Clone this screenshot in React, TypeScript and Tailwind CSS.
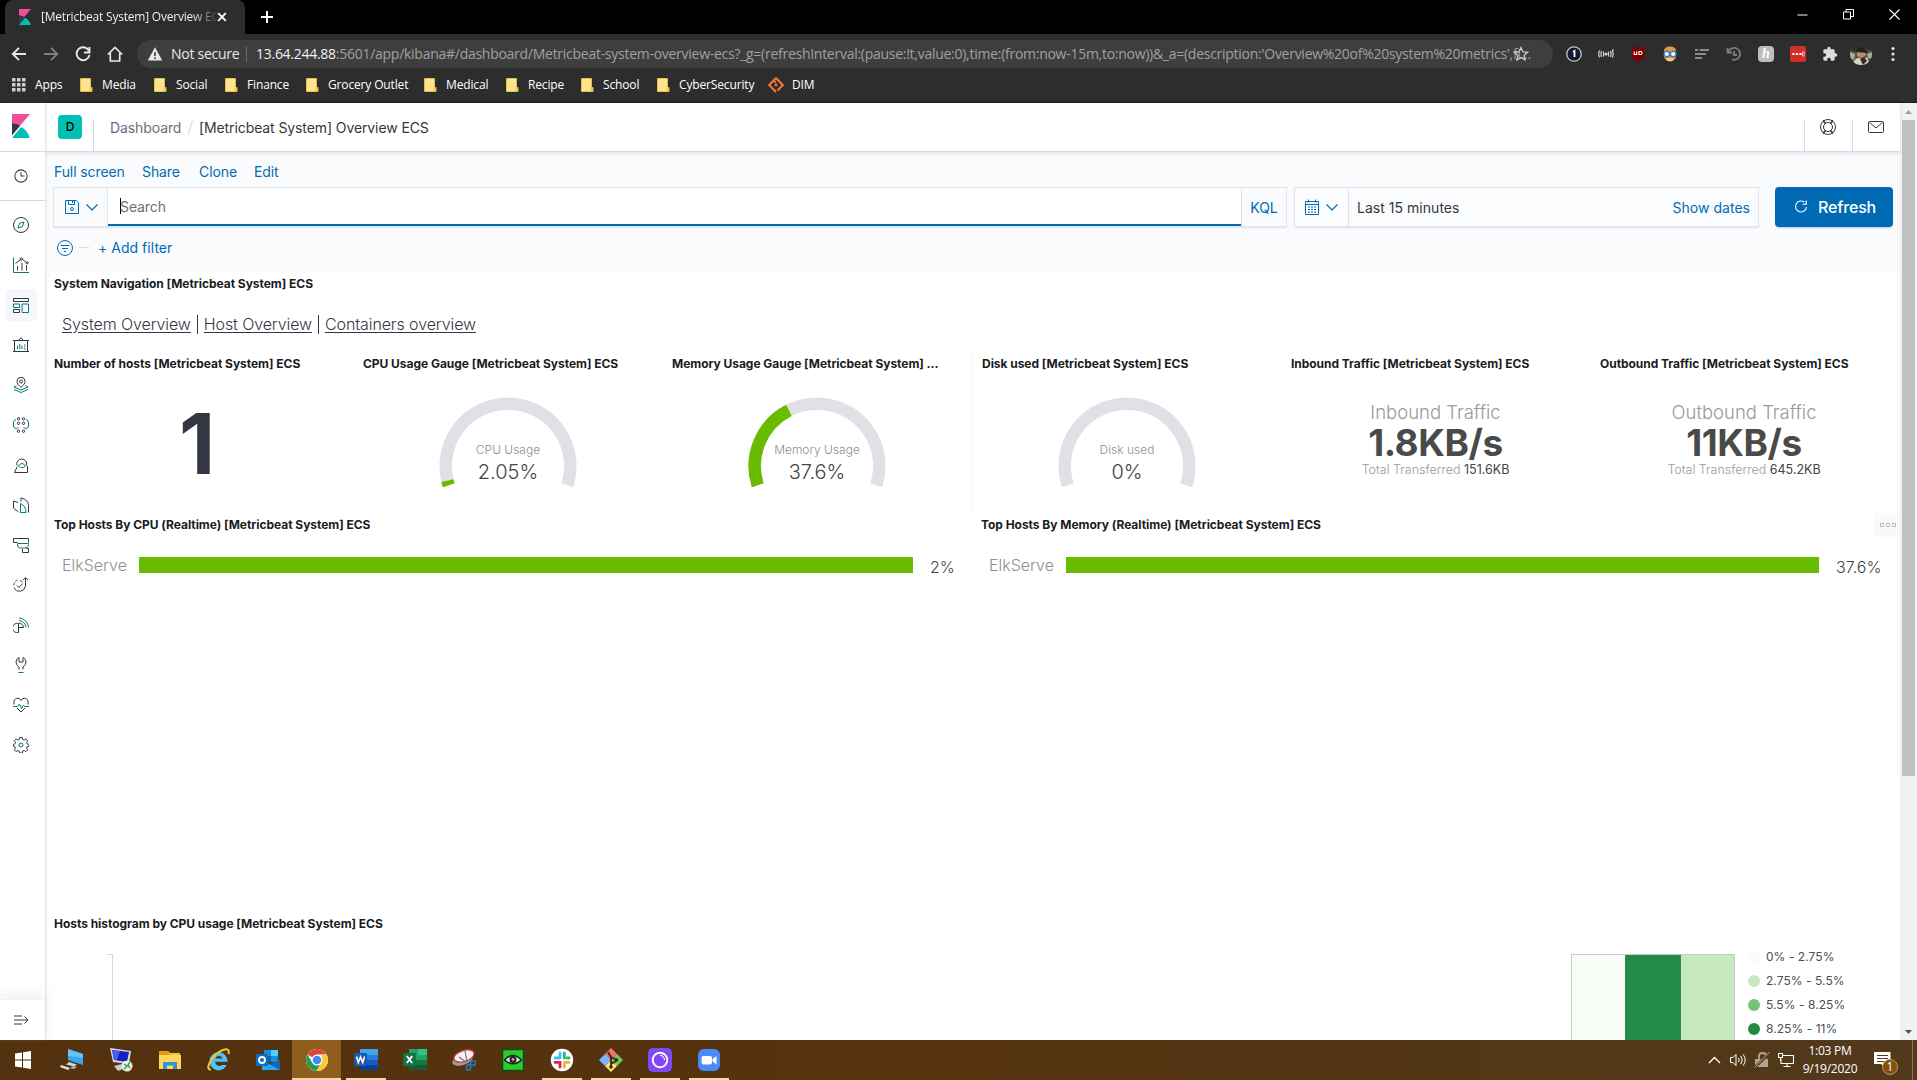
import React from "react";

type Kids = { children?: React.ReactNode };

const DARK = "#343741";
const TEAL = "#017d73";

function Ico({ children, s = 16, c = DARK, w = 1, vb = 16 }: Kids & { s?: number; c?: string; w?: number; vb?: number }) {
  return (
    <svg width={s} height={s} viewBox={`0 0 ${vb} ${vb}`} fill="none" stroke={c} strokeWidth={w} className="block shrink-0">
      {children}
    </svg>
  );
}

function KibanaLogo({ w, h }: { w: number; h: number }) {
  return (
    <svg width={w} height={h} viewBox="0 0 18 24" preserveAspectRatio="none" className="block shrink-0">
      <path d="M0 0h18L0 21.2z" fill="#F04E98" />
      <path d="M0 9.3v12L8 11.7A16 16 0 0 0 0 9.3z" fill="#343741" />
      <path d="M9 13 .6 23.3V24H17.7A16 16 0 0 0 9 13z" fill="#00BFB3" />
    </svg>
  );
}

/* ---------- Browser chrome ---------- */

function TabStrip() {
  return (
    <div className="flex h-[34px] bg-black">
      <div className="ml-[5px] flex h-full w-[240px] items-center rounded-t-lg bg-[#2d2d2d] pl-[14px]">
        <KibanaLogo w={12} h={16} />
        <span className="ml-[10px] w-[176px] overflow-hidden bg-gradient-to-r from-white from-85% to-[#444] bg-clip-text text-[12px] tracking-[-0.21px] whitespace-nowrap text-transparent">
          [Metricbeat System] Overview ECS
        </span>
        <Ico s={10} c="#fff" w={1.9} vb={10}>
          <path d="M1.2 1.2l7.6 7.6M8.8 1.2L1.2 8.8" />
        </Ico>
      </div>
      <div className="ml-[15px] flex items-center">
        <Ico s={14} c="#fff" w={2} vb={14}>
          <path d="M7 1v12M1 7h12" />
        </Ico>
      </div>
      <div className="mr-[17px] ml-auto flex items-center gap-[35px] pb-[6px]">
        <Ico s={11} c="#fff" vb={11}><path d="M.5 6h10" /></Ico>
        <Ico s={11} c="#fff" vb={11}><path d="M.5 3h7v7h-7zM3 3V.5h7.500v7H8" /></Ico>
        <Ico s={11} c="#fff" w={1.1} vb={11}><path d="M.5.5l10 10M10.500.5l-10 10" /></Ico>
      </div>
    </div>
  );
}

function Extensions() {
  return (
    <div className="ml-[13px] flex items-center gap-[16px]">
      <Ico>
        <circle cx="8" cy="8" r="7.200" fill="#111a2e" stroke="#c5c8cc" strokeWidth="1.300" />
        <path d="M7 6l1.500-1v6" stroke="#fff" strokeWidth="1.800" />
      </Ico>
      <Ico c="#d6d6d6" w={1.2}>
        <circle cx="8" cy="8" r="1" fill="#d6d6d6" />
        <path d="M5.500 5.500v5M10.500 5.500v5M3.500 5Q2.500 8 3.500 11M12.500 5q1 3 0 6M1.500 4.500q-1.500 3.500 0 7M14.500 11.500q1.200-3.500 0-7l1-1" />
      </Ico>
      <Ico>
        <path d="M8 .5 14.500 2v6c0 4-3 6-6.500 7.500C4.500 14 1.500 12 1.500 8V2z" fill="#800000" stroke="none" />
        <path d="M4.200 5.500v3h2.500v-3M9 5.500h1.800q1.200 0 1.200 1.500T10.800 8.500H9z" stroke="#fff" strokeWidth="1.100" />
      </Ico>
      <Ico>
        <path d="M2 5q0-4.500 6-4.500T14 5v6q-2 4.500-6 4.500T2 11z" fill="#e59a3c" stroke="none" />
        <path d="M4 12h8l-2 3H6z" fill="#f4c79a" stroke="none" />
        <circle cx="4.800" cy="8" r="2.800" fill="#fff" stroke="#2d7fc4" strokeWidth="1.400" />
        <circle cx="11.200" cy="8" r="2.800" fill="#fff" stroke="#2d7fc4" strokeWidth="1.400" />
      </Ico>
      <Ico c="#8c8c8c" w={2}><path d="M1 4h3M5.500 4H15M1 8h10M1 12h7M10 8h2" /></Ico>
      <Ico c="#7d7d7d" w={1.8}><path d="M2.500 5.500A6 6 0 1 1 6 13.500M1.500 2v4.500H6M8 5v4h3" /></Ico>
      <span className="flex h-4 w-4 items-center justify-center rounded-sm bg-[#bdbdbd] font-['Liberation_Serif',serif] text-[14px] leading-none font-bold text-white italic">h</span>
      <Ico>
        <rect width="16" height="16" rx="2" fill="#d32d27" stroke="none" />
        <path d="M2.300 8h2.200M5.800 8H8M9.300 8h2.200M13.400 5.500v5" stroke="#fff" strokeWidth="2.200" />
        <path d="M13.800 5v6" stroke="#d32d27" />
      </Ico>
      <svg width="16" height="16" viewBox="0 0 24 24" fill="#dcdcdc" className="block">
        <path d="M20.500 11H19V7a2 2 0 0 0-2-2h-4V3.500a2.500 2.500 0 0 0-5 0V5H4a2 2 0 0 0-2 2v3.800h1.500a2.700 2.700 0 0 1 0 5.400H2V20a2 2 0 0 0 2 2h3.800v-1.500a2.700 2.700 0 0 1 5.400 0V22H17a2 2 0 0 0 2-2v-4h1.500a2.500 2.500 0 0 0 0-5z" />
      </svg>
      <svg width="22" height="22" viewBox="0 0 22 22" className="-ml-[4px] block">
        <defs><clipPath id="avatar"><circle cx="11" cy="11" r="11" /></clipPath></defs>
        <g clipPath="url(#avatar)">
          <rect width="22" height="22" fill="#4e5a48" />
          <path d="M0 0h22v8L14 6 6 9 0 7z" fill="#2a3426" />
          <path d="M7 8q4-4 8 0l1 4-4 3-5-2z" fill="#bd8a6c" />
          <path d="M6 7q5-5 10 0l2 3-12-1z" fill="#23201f" />
          <path d="M3 22q1-8 7-7l3 2 4-3 3 8z" fill="#d8d2cb" />
          <path d="M10 16l4-2 3 4-4 4z" fill="#3b2c26" />
          <path d="M0 9l5 2-1 6-4-2zM17 11l5-2v7l-4-1z" fill="#a6ae9f" />
        </g>
      </svg>
      <svg width="4" height="16" viewBox="0 0 4 16" fill="#e6e6e6" className="ml-[3px] block">
        <circle cx="2" cy="2.500" r="1.600" /><circle cx="2" cy="8" r="1.600" /><circle cx="2" cy="13.500" r="1.600" />
      </svg>
    </div>
  );
}

function AddressBar() {
  return (
    <div className="flex h-[35px] items-center pt-1">
      <div className="ml-[11px] flex w-[126px] items-center gap-[16px]">
        <Ico c="#e8e8e8" w={1.9}><path d="M15 8H2M8 1.800L1.800 8 8 14.200" /></Ico>
        <Ico c="#808080" w={1.9}><path d="M1 8h13M8 1.800L14.200 8 8 14.200" /></Ico>
        <Ico c="#e8e8e8" w={1.9}><path d="M13.800 4.500A6.500 6.500 0 1 0 14.500 9M14.500 1v5.500H9" /></Ico>
        <Ico c="#e8e8e8" w={1.7}><path d="M.8 8.500L8 1.500l7.200 7M3.300 7v8h9.400V7" /></Ico>
      </div>
      <div className="flex h-7 w-[1416px] items-center rounded-full bg-[#3e3e3e] pl-[10px]">
        <svg width="16" height="16" viewBox="0 0 16 16" className="block shrink-0">
          <path d="M8 1.200L15.200 14.500H.8z" fill="#e8e8e8" />
          <path d="M8 6v4M8 11.300v1.600" stroke="#3e3e3e" strokeWidth="1.600" />
        </svg>
        <span className="ml-[8px] w-[67px] text-[14px] tracking-[-0.27px] whitespace-nowrap text-[#e8e8e8]">Not secure</span>
        <span className="ml-[8px] h-4 w-px bg-[#6c6c6c]" />
        <span className="ml-[9px] w-[1257px] text-[14px] tracking-[-0.27px] whitespace-nowrap text-[#a0a0a0]">
          <span className="text-[#f0f0f0]">13.64.244.88</span>
          :5601/app/kibana#/dashboard/Metricbeat-system-overview-ecs?_g=(refreshInterval:(pause:!t,value:0),time:(from:now-15m,to:now))&amp;_a=(description:'Overview%20of%20system%20metrics',fi...
        </span>
        <Ico c="#c8c8c8" w={1.3}>
          <path d="M8 1.500l1.900 4.400 4.700.4-3.600 3.100 1.100 4.600L8 11.600 3.900 14 5 9.400 1.400 6.300l4.700-.4z" />
        </Ico>
      </div>
      <Extensions />
    </div>
  );
}

const bookmarks: [string, string][] = [
  ["Media", "w-[74px]"], ["Social", "w-[71px]"], ["Finance", "w-[81px]"], ["Grocery Outlet", "w-[118px]"],
  ["Medical", "w-[82px]"], ["Recipe", "w-[75px]"], ["School", "w-[76px]"], ["CyberSecurity", "w-[111px]"],
];

function BookmarkBar() {
  return (
    <div className="flex h-[34px] items-center border-b border-[#1c1c1c] pb-[2px] pl-[12px] text-[12px] tracking-[-0.15px] whitespace-nowrap text-white">
      <svg width="14" height="14" viewBox="0 0 14 14" fill="#cfcfcf" className="block">
        {[0, 5, 10].map((y) => [0, 5, 10].map((x) => <rect key={x + "-" + y} x={x} y={y} width="3.500" height="3.500" />))}
      </svg>
      <span className="ml-[9px] w-[45px]">Apps</span>
      {bookmarks.map(([name, w]) => (
        <div key={name} className={`flex items-center ${w}`}>
          <svg width="13" height="14" viewBox="0 0 13 14" className="mr-[9px] block shrink-0">
            <path d="M.5.5h10v9h1.500v4H.5z" fill="#ffe48f" stroke="#e8bf45" />
            <path d="M9.500 13V10H12v3.500z" fill="#f2c74a" />
          </svg>
          {name}
        </div>
      ))}
      <Ico c="#f4772e" w={2}>
        <path d="M8 1L1.200 8 8 15M8 5.500L5.500 3.800M8 1l6.800 7L9.500 13.500" />
        <circle cx="8" cy="8" r="1.400" fill="#f4772e" stroke="none" />
      </Ico>
      <span className="ml-[8px]">DIM</span>
    </div>
  );
}

/* ---------- Kibana ---------- */

const navIcons: React.ReactNode[] = [
  <><circle cx="8" cy="8" r="7.500" /><path d="M11 5L9.500 9.500 5 11l1.500-4.500z" stroke={TEAL} /></>,
  <><path d="M.5.500v15H16" stroke={TEAL} /><path d="M4.500 9v4.500M9 6v7.500M13.500 8v5.500M2.500 6.500L7 3M9.500 2.500l4 3" /><circle cx="8.300" cy="2" r="1.200" /><circle cx="14.300" cy="5.800" r="1" /></>,
  <><path d="M.5 1.500h15v3H.5zM.5 12.500h6v3h-6z" /><path d="M.5 7h6v3.500h-6zM9 7h6.500v8.500H9z" stroke={TEAL} /></>,
  <><path d="M1.500 3.500h13v11h-13zM0 3.500h1.500M14.500 3.500H16M0 14.500h2M14 14.500h2M5.500 3.500L8 .8l2.500 2.700" /><path d="M4.500 8.500v3.500M6.800 7v5M9 8.500V12M11 8h1.500M11 10h1.500M11 12h1.500" stroke={TEAL} /></>,
  <><path d="M8 10.500C5 7.500 4 6.500 4 4.300a4 4 0 0 1 8 0C12 6.500 11 7.500 8 10.500z" /><circle cx="8" cy="4.500" r="1.500" /><path d="M3.500 8.500L1 10l7 3 7-3-2.500-1.500M1 12.500l7 3 7-3" stroke={TEAL} /></>,
  <><circle cx="5.500" cy="1.800" r="1.200" /><circle cx="10.500" cy="1.800" r="1.200" /><circle cx="5.500" cy="6.300" r="1.200" /><circle cx="10.500" cy="6.300" r="1.200" /><circle cx="5.500" cy="14.200" r="1.200" /><circle cx="10.500" cy="14.200" r="1.200" /><path d="M3 2.500Q.5 3 .5 6v4l3 2 2-2M13 2.500q2.500.5 2.500 3.500v4l-3 2-2-2" stroke={TEAL} /></>,
  <><path d="M4 8.500a5 5 0 1 1 9.500 0M4.300 9.500L1.500 15.500h13V9" /><path d="M5.500 9Q9 4 12.500 9 9 12.500 5.500 9z" stroke={TEAL} /></>,
  <><path d="M5 5.500L.5 4v7l5 4M8 4.500V.8q7.500 2 7.500 7.700v7" /><path d="M7.500 6.500v9h5.500q0-6.500-5.500-9z" stroke={TEAL} /></>,
  <><path d="M4.500 5.500H.5v-4h15v4M9.500 12v3.500h6v-4h-2" /><path d="M4.500 6.500h11v1q0 3.500-3.500 3.500H7.500Q4.500 11 4.500 8z" stroke={TEAL} /></>,
  <><path d="M1 10.500A6 6 0 0 0 12.500 9V1M10 3l2.500-2.300L15 3M4 8.500l2 2 3.500-4" /><path d="M.8 8.500Q1 4 5 3M7 3.500L10 5" stroke={TEAL} strokeDasharray="3 1.200" /></>,
  <><path d="M5.500 6.500v9a4.700 4.700 0 1 1 0-9zM5.500 10.500h5a4.600 4.600 0 0 0-5-4.300" /><path d="M6 1a10 10 0 0 1 9.500 9.500M6 3.500a7.500 7.500 0 0 1 7 7" stroke={TEAL} /></>,
  <><path d="M6 12.500V10Q3 8 3 5t3-4.500V5h4V.5q3 1.500 3 4.500t-3 5v2.500" /><path d="M5.500 15.500h5" stroke={TEAL} /></>,
  <><path d="M1 7.500Q0 1.500 4.500 1.200 7 1.200 8 3.500 9 1.200 11.500 1.200 16 1.500 15 7.500M4 11l4 4 4-4" /><path d="M0 9.500h4.500L6.500 7l2 4.500L10.500 8l1 1.500H16" stroke={TEAL} /></>,
  <><path d="M6.700.5h2.600l.4 2 1.500.6 1.700-1.200 1.800 1.800-1.200 1.700.6 1.500 2 .4v2l-2 .4-.6 1.500 1.200 1.700-1.800 1.800-1.700-1.200-1.500.6-.4 2H6.700l-.4-2-1.500-.6-1.700 1.200-1.800-1.800 1.200-1.700-.6-1.500-1.400-.4v-2l1.400-.4.6-1.500-1.200-1.700 1.800-1.800 1.700 1.200 1.500-.6z" /><circle cx="8" cy="8" r="2" stroke={TEAL} /></>,
];

function Sidebar() {
  return (
    <nav className="z-10 flex w-[46px] shrink-0 flex-col border-r border-[#e3e6ee] bg-white shadow-[1px_0_3px_rgba(152,162,179,0.15)]">
      <div className="flex h-[49px] border-b border-[#d3dae6] pt-[11px] pl-[12px]">
        <KibanaLogo w={18} h={24} />
      </div>
      <div className="flex h-[49px] items-center border-b border-[#d3dae6] pl-[14px]">
        <Ico s={14}><circle cx="8" cy="8" r="7" strokeWidth="1.150" /><path d="M8 3.500V8h4" strokeWidth="1.150" /></Ico>
      </div>
      <div className="mt-[4px] flex flex-col">
        {navIcons.map((icon, i) => (
          <div key={i} className="flex h-10 items-center pl-[5px]">
            <div className={`flex h-8 w-8 items-center justify-center rounded ${i === 2 ? "bg-[#f5f7fa]" : ""}`}>
              <Ico>{icon}</Ico>
            </div>
          </div>
        ))}
      </div>
      <div className="mt-auto flex h-[41px] items-center border-t border-[#eceff5] pl-[13px] shadow-[0_-6px_14px_rgba(152,162,179,0.15)]">
        <Ico><path d="M1 4h8M1 8h13.500M1 12h8M11.500 4.500L15 8l-3.500 3.500" /></Ico>
      </div>
    </nav>
  );
}

function HeaderBar() {
  return (
    <header className="z-[5] flex h-[49px] shrink-0 border-b border-[#d3dae6] bg-white text-[14px] shadow-[0_2px_3px_rgba(152,162,179,0.25)]">
      <div className="mt-4 flex h-8 w-[48px] border-r border-[#d3dae6] pl-[12px]">
        <span className="-mt-[4px] flex h-6 w-6 items-center justify-center rounded bg-[#00bfb3] text-[12px] font-medium text-black">D</span>
      </div>
      <div className="flex h-12 items-center pl-[16px] whitespace-nowrap">
        <span className="w-[76px] tracking-[-0.1px] text-[#69707d]">Dashboard</span>
        <span className="mr-[7px] ml-[4px] h-4 w-px rotate-[15deg] bg-[#d3dae6]" />
        <span className="ml-[1px] tracking-[-0.1px] text-[#343741]">[Metricbeat System] Overview ECS</span>
      </div>
      <div className="mt-4 ml-auto flex h-8">
        <div className="w-[48px] border-l border-[#d3dae6] pl-[15px]">
          <Ico><circle cx="8" cy="8" r="7.500" /><circle cx="8" cy="8" r="4.500" /><path d="M3 1.500l2.500 3M13 1.500l-2.500 3M3 14.500l2.500-3M13 14.500l-2.500-3" strokeWidth="1.600" /></Ico>
        </div>
        <div className="w-[48px] border-l border-[#d3dae6] pl-[15px]">
          <Ico><rect x=".5" y="2.500" width="15" height="11" rx="1.200" /><path d="M1.500 3.500L8 9l6.500-5.500" /></Ico>
        </div>
      </div>
    </header>
  );
}

function Chevron() {
  return <Ico s={12} c="#006bb4" vb={12} w={1.2}><path d="M.5 3.500L6 9l5.500-5.500" /></Ico>;
}

function QueryArea() {
  return (
    <section className="flex h-[120px] shrink-0 flex-col bg-[#fafbfd] pl-[7px] text-[14px] tracking-[-0.1px] text-[#006bb4]">
      <div className="flex h-[35px] items-center pt-[3px] pl-[1px] whitespace-nowrap">
        <span className="w-[88px]">Full screen</span>
        <span className="w-[57px]">Share</span>
        <span className="w-[55px]">Clone</span>
        <span>Edit</span>
      </div>
      <div className="flex h-[40px]">
        <div className="flex w-[1234px] border border-[#dfe3ec] bg-white shadow-[0_2px_2px_-1px_rgba(152,162,179,0.3)]">
          <div className="flex w-[54px] items-center gap-[6px] border-r border-[#dfe3ec] bg-[#fafbfd] pl-[10px]">
            <Ico c="#006bb4"><path d="M1.500 1.500h10.700l2.300 2.300v10.700h-13zM4.500 1.500v4h6v-4M8.500 2v2" /><circle cx="8" cy="10" r="1.500" /></Ico>
            <Chevron />
          </div>
          <div className="flex flex-1 items-center border-b-2 border-[#006bb4] pl-[12px] text-[#69707d]">
            <span className="-mr-px h-4 w-px bg-black" />
            Search
          </div>
          <div className="flex w-[45px] items-center justify-center border-l border-[#dfe3ec] bg-[#fafbfd]">KQL</div>
        </div>
        <div className="ml-[7px] flex w-[465px] items-center border border-[#dfe3ec] bg-[#fbfcfd] shadow-[0_2px_2px_-1px_rgba(152,162,179,0.3)]">
          <div className="flex h-full w-[54px] items-center gap-[6px] border-r border-[#dfe3ec] pl-[9px]">
            <Ico c="#006bb4"><path d="M1.500 2.500h13v13h-13zM1.500 5.500h13M4.500.5v3M11.500.5v3M4 8h2M7 8h2M10 8h2M4 10.500h2M7 10.500h2M10 10.500h2M4 13h2M7 13h2M10 13h2" /></Ico>
            <Chevron />
          </div>
          <span className="ml-2 tracking-[0.03px] text-[#343741]">Last 15 minutes</span>
          <span className="mr-[8px] ml-auto tracking-[0.03px]">Show dates</span>
        </div>
        <div className="ml-[16px] flex w-[118px] items-center rounded bg-[#006bb4] pl-[18px] text-[16px] font-medium tracking-[-0.15px] text-white shadow-[0_2px_2px_-1px_rgba(0,107,180,0.3)]">
          <Ico c="#fff" w={1.1}><path d="M11.500 3.200A5.500 5.500 0 1 0 13.500 8M13.300 1.500v3.700H9.600" /></Ico>
          <span className="ml-[9px]">Refresh</span>
        </div>
      </div>
      <div className="flex h-[41px] items-center pl-[4px]">
        <Ico c="#006bb4"><circle cx="8" cy="8" r="7.500" /><path d="M3.500 5.500h9M5 8.500h6M7 11.500h2" /></Ico>
        <span className="ml-[6px] h-px w-[10px] bg-[#d3dae6]" />
        <span className="ml-[9px] tracking-[0.03px]">+ Add filter</span>
      </div>
    </section>
  );
}

function Title({ children }: Kids) {
  return <h2 className="h-6 truncate pl-[8px] text-[12px] leading-6 font-bold tracking-[-0.04px] text-[#1a1c21]">{children}</h2>;
}

function point(r: number, deg: number): string {
  const a = (deg * Math.PI) / 180;
  return `${70 + r * Math.cos(a)} ${70 + r * Math.sin(a)}`;
}

function arc(fraction: number): string {
  const end = 162 + 216 * fraction;
  return `M${point(62.300, 162)}A62.300 62.300 0 ${216 * fraction > 180 ? 1 : 0} 1 ${point(62.300, end)}`;
}

function Gauge({ label, value, fraction }: { label: string; value: string; fraction: number }) {
  return (
    <div className="relative mt-[20px] ml-[137px] -translate-x-0 h-[110px] w-[140px] self-start -indent-0 whitespace-nowrap">
      <svg width="140" height="110" viewBox="0 0 140 110" fill="none" strokeWidth="12.500" className="block">
        <path d={arc(1)} stroke="#e0e1e6" />
        {fraction > 0 && <path d={arc(fraction)} stroke="#68bc00" />}
      </svg>
      <div className="absolute inset-x-0 top-[46px] text-center font-light">
        <div className="text-[12px] leading-4 text-[#8f8f8f]">{label}</div>
        <div className="mt-[1px] text-[20px] leading-[26px] text-[#444]">{value}</div>
      </div>
    </div>
  );
}

function Traffic({ label, value, total, pad }: { label: string; value: string; total: string; pad: string }) {
  return (
    <div className={`flex flex-col items-center pt-[22px] font-light whitespace-nowrap ${pad}`}>
      <div className="text-[18.500px] leading-[28px] text-[#9a9a9a]">{label}</div>
      <div className="text-[37px] leading-[34px] font-bold tracking-[-0.4px] text-[#4a4a4a]">{value}</div>
      <div className="mt-[1px] text-[12.500px] leading-[18px] text-[#9a9a9a]">
        Total Transferred <span className="font-normal text-[#444]">{total}</span>
      </div>
    </div>
  );
}

function TopHost({ title, value, bar, menu }: { title: string; value: string; bar: string; menu?: boolean }) {
  return (
    <div className="flex flex-1 flex-col">
      <div className="flex justify-between">
        <Title>{title}</Title>
        {menu && (
          <span className="flex h-6 w-[25px] items-center justify-center gap-[2px] bg-[#f8f9fa]">
            {[0, 1, 2].map((i) => <i key={i} className="h-1 w-1 border border-[#b9bdc4]" />)}
          </span>
        )}
      </div>
      <div className="mt-[12px] flex h-8 items-center pl-4 text-[16px] font-light text-[#8f8f8f]">
        <span className="w-[77px]">ElkServe</span>
        <span className={`h-4 bg-[#68bc00] ${bar}`} />
        <span className="mt-[3px] ml-[17px] text-[#444]">{value}</span>
      </div>
    </div>
  );
}

const legend: [string, string][] = [
  ["0% - 2.75%", "bg-[#f7fcf5]"], ["2.75% - 5.5%", "bg-[#c7e9c0]"], ["5.5% - 8.25%", "bg-[#74c476]"], ["8.25% - 11%", "bg-[#238b45]"],
];

function Dashboard() {
  return (
    <main className="flex min-h-0 flex-1 flex-col overflow-hidden bg-white">
      <section className="h-20 shrink-0">
        <Title>System Navigation [Metricbeat System] ECS</Title>
        <div className="mt-[16px] ml-[16px] flex h-6 items-center text-[16px] font-light tracking-[-0.1px] whitespace-nowrap text-[#343741]">
          <span className="underline underline-offset-2">System Overview</span>
          <span className="mx-[6px] h-[19px] w-px bg-[#343741]" />
          <span className="underline underline-offset-2">Host Overview</span>
          <span className="mx-[6px] h-[19px] w-px bg-[#343741]" />
          <span className="underline underline-offset-2">Containers overview</span>
        </div>
      </section>
      <section className="flex h-40 shrink-0">
        <div className="w-[309px]">
          <Title>Number of hosts [Metricbeat System] ECS</Title>
          <div className="mt-[26px] pr-[7px] text-center text-[84px] leading-[84px] font-bold text-[#343741]">1</div>
        </div>
        <div className="w-[309px]">
          <Title>CPU Usage Gauge [Metricbeat System] ECS</Title>
          <div className="-ml-[54px]"><Gauge label="CPU Usage" value="2.05%" fraction={0.0205} /></div>
        </div>
        <div className="w-[309px] border-r border-[#f3f4f7]">
          <div className="w-[276px]"><Title>Memory Usage Gauge [Metricbeat System] ECS</Title></div>
          <div className="-ml-[54px]"><Gauge label="Memory Usage" value="37.6%" fraction={0.376} /></div>
        </div>
        <div className="w-[310px] pl-px">
          <Title>Disk used [Metricbeat System] ECS</Title>
          <div className="-ml-[54px]"><Gauge label="Disk used" value="0%" fraction={0} /></div>
        </div>
        <div className="w-[309px]">
          <Title>Inbound Traffic [Metricbeat System] ECS</Title>
          <Traffic label="Inbound Traffic" value="1.8KB/s" total="151.6KB" pad="pr-[4px]" />
        </div>
        <div className="flex-1">
          <Title>Outbound Traffic [Metricbeat System] ECS</Title>
          <Traffic label="Outbound Traffic" value="11KB/s" total="645.2KB" pad="pr-[4px]" />
        </div>
      </section>
      <section className="flex h-[400px] shrink-0 pt-px">
        <TopHost title="Top Hosts By CPU (Realtime) [Metricbeat System] ECS" value="2%" bar="w-[774px]" />
        <TopHost title="Top Hosts By Memory (Realtime) [Metricbeat System] ECS" value="37.6%" bar="w-[753px]" menu />
      </section>
      <section className="flex min-h-0 flex-1 flex-col">
        <Title>Hosts histogram by CPU usage [Metricbeat System] ECS</Title>
        <div className="mt-[18px] flex min-h-0 flex-1">
          <div className="ml-[61px] w-[6px] border-t border-r border-[#d5d6d9]" />
          <div className="ml-auto flex w-[164px] border border-b-0 border-[#c9cbc9]">
            <div className="flex-1 bg-[#f7fcf5]" />
            <div className="flex-1 border-x border-[#3b8555] bg-[#238b45]" />
            <div className="flex-1 bg-[#c7e9c0]" />
          </div>
          <div className="-mt-[9px] w-[165px] pl-[13px]">
            {legend.map(([text, color]) => (
              <div key={text} className="flex h-6 items-center text-[12px] tracking-[0.05px] text-[#4a4d55]">
                <span className={`mr-[6px] h-3 w-3 rounded-full ${color}`} />
                {text}
              </div>
            ))}
          </div>
        </div>
      </section>
    </main>
  );
}

function Scrollbar() {
  return (
    <div className="flex w-[17px] shrink-0 flex-col items-center bg-[#f1f1f1]">
      <div className="flex h-[17px] items-center"><svg width="7" height="4"><path d="M0 4L3.500 0 7 4z" fill="#a3a3a3" /></svg></div>
      <div className="h-[656px] w-[13px] bg-[#c1c1c1]" />
      <div className="mt-auto flex h-[17px] items-center"><svg width="7" height="4"><path d="M0 0h7L3.500 4z" fill="#505050" /></svg></div>
    </div>
  );
}

/* ---------- Taskbar ---------- */

function Pic({ children }: Kids) {
  return <svg width="24" height="24" viewBox="0 0 24 24" fill="none" className="block">{children}</svg>;
}

const apps: { icon: React.ReactNode; open?: boolean; active?: boolean }[] = [
  { icon: <><path d="M4 5.500l7-1V11.500H4zM12 4.300l8-1.300v8.500h-8zM4 12.500h7v7l-7-1zM12 12.500h8V21l-8-1.300z" fill="#fff" /></> },
  { icon: <><path d="M8 1l15 5v11L8 12z" fill="#35a9f3" /><path d="M8 1l15 5v4L8 8z" fill="#62c2fa" /><path d="M9 14l8 2.500-3 2-8-2z" fill="#cfd6da" /><path d="M1 17l9 3-2 2-8-3z" fill="#dfe3e5" /><path d="M13 18l4 1-3 2-4-1z" fill="#aab3b8" /></> },
  { icon: <><path d="M1 0l21 3-2 13L4 14z" fill="#d6d8e4" /><path d="M3 2l17 2-2 10L5 12z" fill="#1420c4" /><path d="M3 2l8 1-3 9-3 0z" fill="#4a5be8" /><path d="M5 18l8-2 4 4-8 3z" fill="#ccc" /><circle cx="18" cy="18" r="5.500" fill="#e9f0e4" /><path d="M15 16l3 2-3 3M21 14l-2 3 2 3" stroke="#3a9c3a" strokeWidth="1.400" /></> },
  { icon: <><path d="M1 3h9l2 2h10v16H1z" fill="#f4c344" /><path d="M1 3h9l1 2v2H1z" fill="#dd9a12" /><path d="M1 7h22v14H1z" fill="#ffd75e" /><path d="M5 21v-7h14v7h-4v-3.500H9V21z" fill="#2f93dd" /></> },
  { icon: <><path d="M20 14H8.500a4 4 0 0 0 7 2.200H20A8.500 8.500 0 1 1 20.200 14" stroke="#45bdf3" strokeWidth="0" /><path d="M20.500 13.800a9 9 0 1 0-.8 3.200h-5a4 4 0 0 1-6.500-3.200zM8.300 10.500a4 4 0 0 1 7.400 0z" fill="#4ac3f5" fillRule="evenodd" /><path d="M4 21.500Q-1 22 3 14 8 5 16 2q7-2.500 5.500 4" stroke="#f7c52c" strokeWidth="2" /></> },
  { icon: <><path d="M8 2h14v12H8z" fill="#1490df" /><path d="M15 2h7v6h-7z" fill="#50d0ff" /><path d="M8 8h7v6H8z" fill="#0a62b5" /><path d="M6 12l9 5 9-5v10H6z" fill="#28a8ea" /><path d="M24 12v10L13 16z" fill="#1264b8" /><rect y="6" width="12" height="12" rx="1" fill="#0f6cbd" /><circle cx="6" cy="12" r="3" stroke="#fff" strokeWidth="1.800" /></> },
  { icon: <><circle cx="12" cy="12" r="11" fill="#fff" /><path d="M12 12L2.500 6.500A11 11 0 0 1 21.500 6.500H12z" fill="#e0453a" /><path d="M2.500 6.500A11 11 0 0 0 11.500 23l5-8.500L12 12 7.500 15z" fill="#279b50" /><path d="M21.500 6.500A11 11 0 0 1 11.500 23l5-8.500V6.500z" fill="#fcc934" /><circle cx="12" cy="12" r="5.500" fill="#fff" /><circle cx="12" cy="12" r="4.300" fill="#4687f4" /></>, active: true },
  { icon: <><path d="M6 1h18v6H6z" fill="#41a5ee" /><path d="M6 7h18v5H6z" fill="#2b7cd3" /><path d="M6 12h18v5H6z" fill="#185abd" /><path d="M6 17h18v5H6z" fill="#103f91" /><rect y="5" width="13" height="13" rx="1" fill="#1b57b5" /><path d="M2.500 8.500l1.800 6L6.500 9l2.200 5.500 1.800-6" stroke="#fff" strokeWidth="1.600" /></>, open: true },
  { icon: <><path d="M6 1h18v21H6z" fill="#21a366" /><path d="M15 1h9v6h-9z" fill="#33c481" /><path d="M6 12h18v10H6z" fill="#107c41" /><path d="M6 17h18v5H6z" fill="#185c37" /><rect y="5" width="13" height="13" rx="1" fill="#107542" /><path d="M3.800 8l5.400 7M9.200 8l-5.400 7" stroke="#fff" strokeWidth="1.900" /></> },
  { icon: <><ellipse cx="11" cy="12" rx="10.500" ry="5" transform="rotate(-18 11 14)" fill="#a29a98" /><ellipse cx="12" cy="8" rx="10.500" ry="5.500" transform="rotate(-18 12 8)" fill="#f6f2f2" stroke="#d43636" strokeWidth="1.300" /><path d="M7 9l7 5M13 3l2 11" stroke="#777" strokeWidth="1.200" /><circle cx="21" cy="15" r="2.500" stroke="#1f7cba" strokeWidth="1.600" /><ellipse cx="16.500" cy="19.500" rx="2" ry="3" stroke="#1f7cba" strokeWidth="1.600" /></> },
  { icon: <><rect x="1.500" y="1.500" width="21" height="21" rx="1.500" fill="#2bcb2b" stroke="#0d4c12" strokeWidth="1.500" /><path d="M3.500 12q8.500-9 17 0-8.500 7.500-17 0z" fill="#dfe8df" stroke="#10240f" strokeWidth="1.500" /><circle cx="12" cy="11.500" r="3.500" fill="#222" /><circle cx="12" cy="11.500" r="1.400" fill="#aaa" /></> },
  { icon: <><circle cx="12" cy="12" r="11.200" fill="#fff" /><path d="M10 5v5M5 10h3" stroke="#36c5f0" strokeWidth="2.800" strokeLinecap="round" /><path d="M14.300 5v5M17 10h2" stroke="#2eb67d" strokeWidth="2.800" strokeLinecap="round" /><path d="M14.300 14.300h4.700M14.300 17v2" stroke="#ecb22e" strokeWidth="2.800" strokeLinecap="round" /><path d="M5 14.300h5v4.700" stroke="#e01e5a" strokeWidth="2.800" strokeLinecap="round" /></>, open: true },
  { icon: <><path d="M12 0l6 6-6 6-6-6z" fill="#f47068" /><path d="M6 6l6 6-6 6-6-6z" fill="#80b3ff" /><path d="M18 6l6 6-6 6-6-6z" fill="#79c85a" /><path d="M12 12l6 6-6 6-6-6z" fill="#ffe069" /><path d="M9 4l3 5v10M12 9l6 3M12 16l5-3" stroke="#3c2a17" strokeWidth="1.900" /><circle cx="12" cy="19" r="1.800" fill="#3c2a17" /><circle cx="17.500" cy="12" r="1.800" fill="#3c2a17" /></>, open: true },
  { icon: <><rect width="24" height="24" rx="5" fill="#8049f5" /><circle cx="12" cy="12" r="7.300" stroke="#fff" strokeWidth="1.900" /><path d="M12 7.500a4.500 4.500 0 0 1 4.500 4.500" stroke="#fff" strokeWidth="1.200" /></>, open: true },
  { icon: <><rect x="1" y="1" width="22" height="22" rx="6" fill="#4a8cf7" /><rect x="4.500" y="8" width="10.500" height="8.500" rx="2" fill="#fff" /><path d="M15.500 11l4-3v8.500l-4-3z" fill="#fff" /></>, open: true },
];

function Taskbar() {
  return (
    <footer className="flex h-10 shrink-0 bg-gradient-to-r from-[#54320f] via-[#55330f] to-[#51391b]">
      <div className="flex -translate-x-[3px]">
        {apps.map((app, i) => (
          <div key={i} className={`flex w-[49px] flex-col items-center ${i === 0 ? "-mr-px ml-0 w-[51px]" : ""} ${app.active ? "bg-[#8f5d1e]" : ""}`}>
            <div className="flex h-[38px] items-center pt-[2px]"><Pic>{app.icon}</Pic></div>
            {(app.open || app.active) && <div className={`h-[2px] bg-[#fbd5ab] ${app.active ? "w-full" : "w-10"}`} />}
          </div>
        ))}
      </div>
      <div className="ml-auto flex items-center text-[12px] text-white">
        <div className="flex items-center gap-[8px]">
          <Ico c="#fff" w={1.3}><path d="M3 11l5.500-5.500L14 11" /></Ico>
          <Ico c="#fff"><path d="M.5 5.500h2.500L6 2.500v11l-3-3H.5zM8.500 6q1.500 2 0 4M10.800 4q3 4 0 8M13.200 2.500q4 5.500 0 11" /></Ico>
          <Ico c="#b1a391" w={1.8}><path d="M5 7V4q0-3 3.500-3T12 4v3" /><path d="M1 7h13v8H1z" fill="#b1a391" stroke="none" /><path d="M16 1L1 15" stroke="#54381a" strokeWidth="2.500" /><path d="M15.500 0L.5 15.500" strokeWidth="1" /></Ico>
          <Ico c="#fff" w={1.1}><path d="M4 3.500h11.500v8H3V7M9 11.500v3M5.500 14.500h7M.5 1.500h4v4h-4zM2.500 5.500V9" /></Ico>
        </div>
        <div className="ml-[7px] w-[58px] text-center leading-[18px] tracking-[-0.25px] whitespace-nowrap">
          <div>1:03 PM</div>
          <div>9/19/2020</div>
        </div>
        <div className="relative ml-[15px] h-6 w-[38px]">
          <svg width="17" height="17" viewBox="0 0 17 17" className="mt-[4px] block"><path d="M0 0h16.500v12H11v4l-4-4H0z" fill="#fff" /><path d="M3 3.500h11M3 6.500h11M3 9.500h7" stroke="#54381a" strokeWidth="1.200" /></svg>
          <span className="absolute top-[11px] left-[8px] flex h-4 w-4 items-center justify-center rounded-full border border-[#b99868] bg-[#874f0d] text-[12px] leading-none">1</span>
        </div>
        <div className="h-full w-[5px] border-l border-[#8a7458]" />
      </div>
    </footer>
  );
}

export default function App() {
  return (
    <div className="flex h-[1080px] w-[1917px] flex-col overflow-hidden bg-white font-['Inter',sans-serif]">
      <div className="h-[103px] shrink-0 bg-[#2d2d2d] font-['Open_Sans',sans-serif]">
        <TabStrip />
        <AddressBar />
        <BookmarkBar />
      </div>
      <div className="flex min-h-0 flex-1">
        <Sidebar />
        <div className="flex min-w-0 flex-1 flex-col">
          <HeaderBar />
          <QueryArea />
          <Dashboard />
        </div>
        <Scrollbar />
      </div>
      <div className="font-['Open_Sans',sans-serif]"><Taskbar /></div>
    </div>
  );
}
